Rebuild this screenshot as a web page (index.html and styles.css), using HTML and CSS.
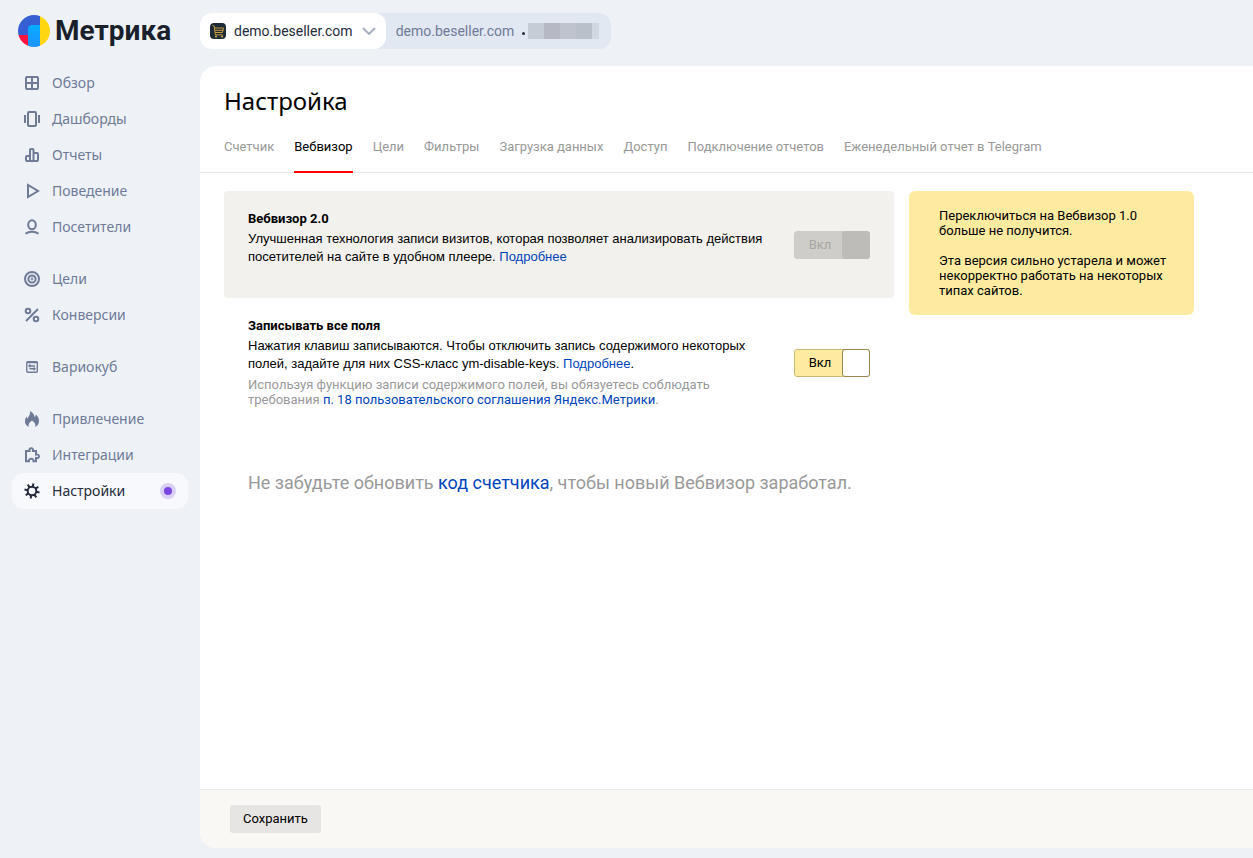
FILE: index.html
```html
<!DOCTYPE html>
<html lang="ru">
<head>
<meta charset="utf-8">
<meta name="viewport" content="width=device-width, initial-scale=1">
<title>Метрика — Настройка</title>
<link rel="stylesheet" href="styles.css">
</head>
<body>
<div class="app">
  <aside class="sidebar">
    <a class="logo" href="#">
      <svg class="logo-mark" viewBox="0 0 32 32" aria-hidden="true">
        <defs>
          <clipPath id="disc"><circle cx="16" cy="16" r="16"/></clipPath>
          <linearGradient id="sky" x1="0" y1="0" x2="0" y2="1"><stop offset="0" stop-color="#04acff"/><stop offset="1" stop-color="#1f94ff"/></linearGradient>
        </defs>
        <g clip-path="url(#disc)">
          <path fill="#355fd3" d="M0 0h22v20H0z"/>
          <path fill="#ffd60f" d="M22 0h10v32H22z"/>
          <path fill="#ff1440" d="M0 20h11v12H0z"/>
          <path fill="url(#sky)" d="M10 32V14a4 4 0 0 1 4-4h8v22z"/>
        </g>
      </svg>
      <span class="logo-text">Метрика</span>
    </a>
    <nav class="nav">
      <div class="nav-group">
        <a class="nav-item" href="#"><svg class="nav-icon" viewBox="0 0 16 16"><rect x="2" y="2" width="12" height="12" rx="1"/><path d="M8 2v12M2 8h12"/></svg>Обзор</a>
        <a class="nav-item" href="#"><svg class="nav-icon" viewBox="0 0 16 16"><rect x="4" y="1" width="8" height="14" rx="1"/><path d="M1 4v8M15 4v8"/></svg>Дашборды</a>
        <a class="nav-item" href="#"><svg class="nav-icon" viewBox="0 0 16 16"><path d="M6 14V3a1 1 0 0 1 1-1h1.500a1 1 0 0 1 1 1v11M6 9H3a1 1 0 0 0-1 1v3a1 1 0 0 0 1 1h10a1 1 0 0 0 1-1V7a1 1 0 0 0-1-1H9.500"/></svg>Отчеты</a>
        <a class="nav-item" href="#"><svg class="nav-icon" viewBox="0 0 16 16"><path d="M4 2v12L14 8z"/></svg>Поведение</a>
        <a class="nav-item" href="#"><svg class="nav-icon" viewBox="0 0 16 16"><ellipse cx="8" cy="5.800" rx="3.800" ry="4.500"/><path d="M1.500 14.800c2-1.700 4-2.100 6.500-2.100s4.500.4 6.500 2.100"/></svg>Посетители</a>
      </div>
      <div class="nav-group">
        <a class="nav-item" href="#"><svg class="nav-icon" viewBox="0 0 16 16"><circle cx="8" cy="8" r="7"/><circle cx="8" cy="8" r="3.600"/><circle cx="8" cy="8" r=".4"/></svg>Цели</a>
        <a class="nav-item" href="#"><svg class="nav-icon" viewBox="0 0 16 16"><circle cx="4" cy="4" r="2.300"/><circle cx="12" cy="12" r="2.300"/><path d="M2 14L14 2"/></svg>Конверсии</a>
      </div>
      <div class="nav-group">
        <a class="nav-item" href="#"><svg class="nav-icon nav-icon-thin" viewBox="0 0 16 16"><rect x="2.800" y="2.800" width="10.500" height="10.500" rx="1"/><path d="M2.800 3.500h10.500M6.500 5.500L5 7l1.500 1.200M5 7h6M9.500 8.500L11 9.800 9.500 11.300M11 9.800H5.500"/></svg>Вариокуб</a>
      </div>
      <div class="nav-group">
        <a class="nav-item" href="#"><svg class="nav-icon nav-icon-solid" viewBox="0 0 16 16"><path d="M6 0c3 1.500 4.300 3.800 4.600 6 .8-.5 1.200-1.400 1.200-2.400C13.800 5.200 15 7.500 15 10c0 3-1.500 4.800-3.800 6 .9-2.600-.4-4.600-3.200-6.400C5.200 11.400 3.900 13.400 4.800 16 2.500 14.800 1 13 1 10.200c0-1.900.7-3.500 1.600-4.700.2 1 .5 1.600 1.200 2C4.500 5 6.700 3.300 6 0z"/></svg>Привлечение</a>
        <a class="nav-item" href="#"><svg class="nav-icon" viewBox="0 0 16 16"><path d="M2 4h3.500C5 2.300 5.800 1.300 7.200 1.300S9.400 2.300 9 4h3v3.500c1.800-.3 3 .4 3 1.800s-1.200 2-3 1.700V14.300H9.500c.2-1.800-.8-2.600-2.300-2.600s-2.500.8-2.300 2.600H2z"/></svg>Интеграции</a>
        <a class="nav-item nav-item-active" href="#" aria-current="page"><svg class="nav-icon" viewBox="0 0 16 16"><circle cx="8" cy="8" r="4.300"/><path d="M12.300 8.800l3.200.6M10.400 11.600l1.900 2.700M7.200 12.300l-.6 3.200M4.400 10.400l-2.700 1.900M3.700 7.200L.5 6.600M5.600 4.400L3.700 1.700M8.800 3.700l.6-3.200M11.600 5.600l2.700-1.900"/></svg>Настройки<span class="nav-dot"></span></a>
      </div>
    </nav>
  </aside>

  <div class="page">
    <header class="topbar">
      <div class="counter">
        <button class="counter-select" type="button">
          <svg class="counter-icon" viewBox="0 0 16 16" aria-hidden="true"><rect width="16" height="16" rx="4" fill="#1e2b38"/><path d="M2.500 2.500l1.700.6 1.200 8.700h7.300M4.600 5h8.900l-1 4.500H5.200M5 7.300h8" fill="none" stroke="#c79d3d"/><circle cx="6" cy="13.500" r="1" fill="#e3b64a"/><circle cx="12" cy="13.500" r="1" fill="#e3b64a"/></svg>
          <span>demo.beseller.com</span>
          <svg class="chevron" viewBox="0 0 14 8" aria-hidden="true"><path d="M1 1l6 6 6-6"/></svg>
        </button>
        <a class="counter-link" href="#">demo.beseller.com</a>
        <span class="counter-bullet"></span>
        <span class="counter-mask"></span>
      </div>
    </header>

    <main class="panel">
      <h1 class="title">Настройка</h1>
      <nav class="tabs">
        <a class="tab" href="#">Счетчик</a>
        <a class="tab tab-active" href="#" aria-current="page">Вебвизор</a>
        <a class="tab" href="#">Цели</a>
        <a class="tab" href="#">Фильтры</a>
        <a class="tab" href="#">Загрузка данных</a>
        <a class="tab" href="#">Доступ</a>
        <a class="tab" href="#">Подключение отчетов</a>
        <a class="tab" href="#">Еженедельный отчет в Telegram</a>
      </nav>

      <div class="content">
        <div class="options">
          <section class="option option-locked">
            <div class="option-body">
              <h2 class="option-title">Вебвизор 2.0</h2>
              <p class="option-text">Улучшенная технология записи визитов, которая позволяет анализировать действия посетителей на сайте в удобном плеере. <a class="link" href="#">Подробнее</a></p>
            </div>
            <label class="switch"><input class="switch-input" type="checkbox" aria-label="Вебвизор 2.0" checked disabled><span class="switch-label">Вкл</span><span class="switch-knob"></span></label>
          </section>
          <section class="option">
            <div class="option-body">
              <h2 class="option-title">Записывать все поля</h2>
              <p class="option-text">Нажатия клавиш записываются. Чтобы отключить запись содержимого некоторых полей, задайте для них CSS-класс ym-disable-keys. <a class="link" href="#">Подробнее</a>.</p>
              <p class="option-note">Используя функцию записи содержимого полей, вы обязуетесь соблюдать<br>требования <a class="link" href="#">п. 18 пользовательского соглашения Яндекс.Метрики</a>.</p>
            </div>
            <label class="switch"><input class="switch-input" type="checkbox" aria-label="Записывать все поля" checked><span class="switch-label">Вкл</span><span class="switch-knob"></span></label>
          </section>
          <p class="reminder">Не забудьте обновить <a class="link" href="#">код счетчика</a>, чтобы новый Вебвизор заработал.</p>
        </div>
        <aside class="hint">
          <p>Переключиться на Вебвизор 1.0<br>больше не получится.</p>
          <p>Эта версия сильно устарела и может<br>некорректно работать на некоторых<br>типах сайтов.</p>
        </aside>
      </div>

      <footer class="actions">
        <button class="save" type="button">Сохранить</button>
      </footer>
    </main>
  </div>
</div>
</body>
</html>
```
FILE: styles.css
```css
* { box-sizing: border-box; }
body, h1, h2, p { margin: 0; }
body {
  background: #eef2f7;
  color: #000;
  font: 13px/15px Roboto, sans-serif;
}
a { color: inherit; text-decoration: none; }
button { border: 0; font: inherit; color: inherit; cursor: pointer; }

.app { display: flex; min-height: 100vh; }

.sidebar { flex: 0 0 200px; min-width: 0; padding: 13px 12px; }
.logo { display: flex; align-items: center; gap: 5px; height: 36px; padding-left: 6px; }
.logo-mark { flex: none; width: 32px; height: 32px; }
.logo-text { color: #1a1f2c; font: bold 28px/36px Roboto, sans-serif; }
.nav { display: flex; flex-direction: column; gap: 16px; margin-top: 16px; }
.nav-item {
  display: flex;
  align-items: center;
  gap: 12px;
  height: 36px;
  padding: 0 12px;
  border-radius: 12px;
  color: #6f7a97;
  font: 14px/20px "Noto Sans", sans-serif;
}
.nav-item-active { background: #f7f9fd; color: #252b3c; }
.nav-icon {
  width: 16px;
  height: 16px;
  fill: none;
  stroke: currentColor;
  stroke-width: 2;
  overflow: visible;
}
.nav-icon-thin { stroke-width: 1.4; }
.nav-icon-solid { fill: currentColor; stroke: none; }
.nav-dot {
  width: 16px;
  height: 16px;
  margin-left: auto;
  border: 4px solid #dacff7;
  border-radius: 50%;
  background: #7a45e5;
}

.page { flex: 1; min-width: 0; display: flex; flex-direction: column; padding-bottom: 10px; }
.topbar { display: flex; padding: 13px 0 17px; }
.counter {
  display: flex;
  align-items: center;
  height: 36px;
  padding-right: 12px;
  border-radius: 12px;
  background: #e1e8f2;
  font-size: 14px;
  line-height: 20px;
}
.counter-select {
  display: flex;
  align-items: center;
  gap: 8px;
  height: 36px;
  padding: 0 10px;
  border-radius: 12px;
  background: #fff;
  color: #252b3c;
}
.counter-icon { width: 16px; height: 16px; }
.chevron { width: 14px; height: 8px; margin-left: 1px; fill: none; stroke: #a7afc1; stroke-width: 2; }
.counter-link { margin-left: 10px; color: #6f7a97; }
.counter-bullet { width: 3px; height: 3px; margin: 4px 3px 0 8px; border-radius: 50%; background: #252b3c; }
.counter-mask {
  width: 71px;
  height: 16px;
  background: linear-gradient(90deg, #c6ccd6 0 16px, #b6b9c4 16px 32px, #bec3ce 32px 48px, #b9c0ca 48px 64px, #d1d8e2 64px);
}

.panel {
  flex: 1;
  display: flex;
  flex-direction: column;
  overflow: hidden;
  border-radius: 16px 0 0 16px;
  background: #fff;
}
.title { padding: 19px 24px 0; font: 24px/32px "Noto Sans", sans-serif; }
.tabs { display: flex; gap: 20px; padding: 14px 24px 0; border-bottom: 1px solid #e8e8e8; }
.tab { padding: 8px 0 17px; margin-bottom: -1px; border-bottom: 2px solid transparent; color: #999; white-space: nowrap; }
.tab-active { border-color: #f00; color: #000; }

.content {
  flex: 1;
  display: grid;
  grid-template-columns: minmax(0, 670px) 285px;
  align-items: start;
  gap: 15px;
  padding: 18px 24px;
}
.option { display: flex; align-items: center; justify-content: space-between; gap: 24px; padding: 0 24px; border-radius: 4px; }
.option-locked { min-height: 107px; background: #f2f1ed; }
.option-body { align-self: stretch; max-width: 522px; padding: 19px 0 21px; }
.option-title { font-size: 13px; line-height: 18px; }
.option-text { margin-top: 2px; font: 13px/18px "Liberation Sans", Arial, sans-serif; }
.option-note { margin-top: 4px; color: #999; }
.link { color: #04b; }

.switch {
  position: relative;
  flex: none;
  display: flex;
  width: 76px;
  height: 28px;
  border: 1px solid #c9b777;
  border-radius: 3px;
  background: #ffeba0;
  cursor: pointer;
}
.switch-input { position: absolute; inset: 0; margin: 0; opacity: 0; }
.switch-label { flex: 1; padding-left: 2px; line-height: 26px; text-align: center; }
.switch-knob { width: 28px; margin: -1px; border: 1px solid #99874f; border-radius: 3px; background: #fff; }
.option-locked .switch { border-color: #cfcdc9; background: #cfcdc9; color: #a8a6a3; cursor: default; }
.option-locked .switch-knob { border-color: #bebcb8; background: #bebcb8; }

.reminder { margin-top: 43px; padding: 0 24px; color: #999; font-size: 18px; line-height: 24px; }
.hint {
  display: grid;
  gap: 15px;
  padding: 17px 20px 17px 30px;
  border-radius: 6px;
  background: #ffeba0;
}
.actions { padding: 15px 30px; border-top: 1px solid #ebebeb; background: #f9f8f4; }
.save {
  display: block;
  height: 28px;
  padding: 0 13px 1px;
  border-radius: 3px;
  background: #e6e5e3;
}
```
